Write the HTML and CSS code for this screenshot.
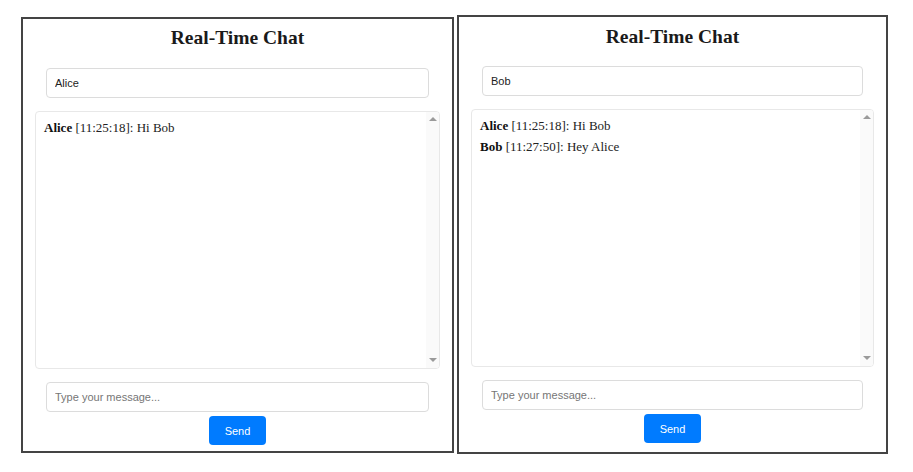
FILE: index.html
```html
<!DOCTYPE html>
<html lang="en">
<head>
<meta charset="utf-8">
<title>Real-Time Chat</title>
<link rel="stylesheet" href="styles.css">
</head>
<body>
<div class="windows">
  <section class="chat-panel chat-panel--left">
    <h1 class="chat-title">Real-Time Chat</h1>
    <input class="field field--name" type="text" value="Alice">
    <div class="chat-box">
      <div class="messages">
        <div class="message"><strong>Alice</strong> [11:25:18]: Hi Bob</div>
      </div>
      <div class="scrollbar">
        <span class="arrow arrow--up"></span>
        <span class="arrow arrow--down"></span>
      </div>
    </div>
    <input class="field field--message" type="text" placeholder="Type your message...">
    <button class="send-btn" type="button">Send</button>
  </section>

  <section class="chat-panel chat-panel--right">
    <h1 class="chat-title">Real-Time Chat</h1>
    <input class="field field--name" type="text" value="Bob">
    <div class="chat-box">
      <div class="messages">
        <div class="message"><strong>Alice</strong> [11:25:18]: Hi Bob</div>
        <div class="message"><strong>Bob</strong> [11:27:50]: Hey Alice</div>
      </div>
      <div class="scrollbar">
        <span class="arrow arrow--up"></span>
        <span class="arrow arrow--down"></span>
      </div>
    </div>
    <input class="field field--message" type="text" placeholder="Type your message...">
    <button class="send-btn" type="button">Send</button>
  </section>
</div>
</body>
</html>
```

FILE: styles.css
```css
* { box-sizing: border-box; }

html, body {
  margin: 0;
  padding: 0;
  background: #ffffff;
}

body {
  font-family: "Liberation Serif", "Times New Roman", serif;
  color: #222;
}

.windows {
  display: flex;
  align-items: flex-start;
  gap: 3px;
  padding-left: 21px;
}

.chat-panel {
  display: flex;
  flex-direction: column;
  align-items: stretch;
  border: 2px solid #444;
  padding: 0 12px;
}

.chat-panel--left {
  width: 433px;
  height: 436px;
  margin-top: 17px;
}

.chat-panel--right {
  width: 431px;
  height: 439px;
  margin-top: 15px;
}

.chat-panel--right .chat-title {
  padding-top: 9px;
}

.chat-panel--right .field--name {
  margin-top: 18px;
}

.chat-title {
  margin: 0;
  padding-top: 8px;
  font-family: "Liberation Serif", "Times New Roman", serif;
  font-size: 19.5px;
  line-height: 22px;
  font-weight: bold;
  text-align: center;
  color: #1a1a1a;
}

.field {
  display: block;
  height: 30px;
  margin: 0 11px;
  padding: 0 8px;
  border: 1px solid #dcdcdc;
  border-radius: 4px;
  font-family: "Liberation Sans", Arial, sans-serif;
  font-size: 11px;
  color: #222;
  background: #fff;
  outline: none;
}

.field::placeholder {
  color: #767676;
}

.field--name {
  margin-top: 19px;
}

.field--message {
  margin-top: 13px;
}

.chat-box {
  display: flex;
  height: 258px;
  margin-top: 13px;
  border: 1px solid #e8e8e8;
  border-radius: 4px;
  background: #fff;
  overflow: hidden;
}

.messages {
  flex: 1;
  padding: 8px 8px;
  font-family: "Liberation Serif", "Times New Roman", serif;
  font-size: 13px;
  line-height: 15px;
  color: #222;
}

.message {
  margin-bottom: 6px;
}

.message strong {
  color: #111;
}

.scrollbar {
  width: 13px;
  display: flex;
  flex-direction: column;
  justify-content: space-between;
  align-items: center;
  padding: 5px 0 6px;
  background: #fafafa;
}

.arrow {
  width: 0;
  height: 0;
  border-left: 4px solid transparent;
  border-right: 4px solid transparent;
}

.arrow--up {
  border-bottom: 4px solid #9a9a9a;
}

.arrow--down {
  border-top: 4px solid #9a9a9a;
}

.send-btn {
  align-self: center;
  margin-top: 4px;
  height: 29px;
  padding: 0 16px;
  border: none;
  border-radius: 4px;
  background: #007bff;
  color: #fff;
  font-family: "Liberation Sans", Arial, sans-serif;
  font-size: 11px;
  cursor: pointer;
}
```
